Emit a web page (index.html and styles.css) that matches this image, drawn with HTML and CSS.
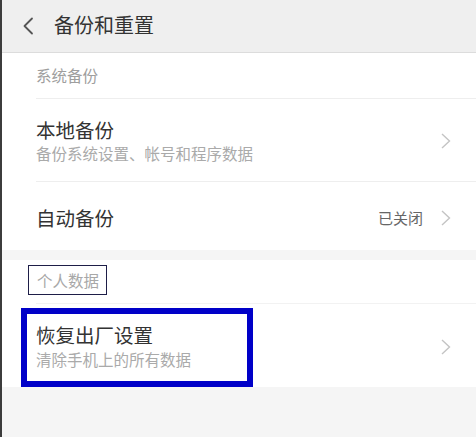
FILE: index.html
```html
<!DOCTYPE html>
<html lang="zh-CN">
<head>
<meta charset="utf-8">
<title>备份和重置</title>
<link rel="stylesheet" href="styles.css">
</head>
<body>
<div class="screen">
  <header class="topbar">
    <svg class="back" width="12" height="18" viewBox="0 0 12 18"><path d="M10 1.5 L2.5 9 L10 16.5" fill="none" stroke="#555" stroke-width="1.8" stroke-linecap="round" stroke-linejoin="round"/></svg>
    <h1 class="title">备份和重置</h1>
  </header>

  <section class="group">
    <div class="group-title">系统备份</div>
    <div class="item item-two">
      <div class="texts">
        <div class="primary">本地备份</div>
        <div class="secondary">备份系统设置、帐号和程序数据</div>
      </div>
      <svg class="chev" width="10" height="16" viewBox="0 0 10 16"><path d="M1 1 L8.5 8 L1 15" fill="none" stroke="#c4c4c4" stroke-width="1.4"/></svg>
    </div>
    <div class="item item-one">
      <div class="texts">
        <div class="primary">自动备份</div>
      </div>
      <span class="value">已关闭</span>
      <svg class="chev" width="10" height="16" viewBox="0 0 10 16"><path d="M1 1 L8.5 8 L1 15" fill="none" stroke="#c4c4c4" stroke-width="1.4"/></svg>
    </div>
  </section>

  <section class="group group-second">
    <div class="group-title group-title-marked"><span class="marked">个人数据</span></div>
    <div class="item item-two item-last">
      <div class="texts">
        <div class="primary">恢复出厂设置</div>
        <div class="secondary">清除手机上的所有数据</div>
      </div>
      <svg class="chev" width="10" height="16" viewBox="0 0 10 16"><path d="M1 1 L8.5 8 L1 15" fill="none" stroke="#c4c4c4" stroke-width="1.4"/></svg>
      <span class="annot"></span>
    </div>
  </section>
</div>
</body>
</html>
```

FILE: styles.css
```css
* { box-sizing: border-box; }
html, body {
  margin: 0;
  padding: 0;
  height: 100%;
}
body {
  background: #f5f5f5;
  font-family: "Noto Sans CJK SC", "Noto Sans", sans-serif;
  color: #333;
}
.screen {
  min-height: 100%;
  border-left: 2px solid #3c3c3c;
  background: #f5f5f5;
}
.topbar {
  height: 53px;
  background: #efefef;
  border-bottom: 1px solid #dcdcdc;
  display: flex;
  align-items: center;
  padding-left: 20px;
}
.back {
  display: block;
  margin-top: -1px;
}
.title {
  margin: 0 0 0 20px;
  font-size: 20px;
  font-weight: 400;
  color: #333;
  line-height: 24px;
  margin-top: -2px;
}
.group {
  background: #fff;
}
.group-second {
  margin-top: 10px;
}
.group-title {
  height: 45px;
  padding-left: 34px;
  display: flex;
  align-items: center;
  font-size: 15.5px;
  color: #9e9e9e;
  padding-bottom: 1px;
}
.group-title-marked {
  height: 43px;
  padding-left: 26px;
  align-items: flex-start;
  padding-top: 5px;
}
.marked {
  display: flex;
  align-items: center;
  height: 30px;
  padding: 0 7px 0 8px;
  border: 1px solid #1e1e48;
  color: #a8a8a8;
}
.item {
  position: relative;
  margin-left: 34px;
  border-top: 1px solid #eeeeee;
  display: flex;
  align-items: center;
  padding-right: 25px;
}
.item-two {
  height: 83px;
  padding-top: 2px;
}
.item-one {
  height: 69px;
  padding-top: 3px;
}
.item-last {
  height: 84px;
  border-top-color: #f2f2f2;
}
.texts {
  flex: 1;
  display: flex;
  flex-direction: column;
}
.primary {
  font-size: 19.5px;
  line-height: 24px;
  color: #333;
}
.secondary {
  font-size: 15.5px;
  line-height: 23px;
  color: #aaaaaa;
}
.item-last .secondary {
  margin-top: 1px;
}
.value {
  font-size: 15px;
  color: #666;
  margin-right: 18px;
}
.chev {
  display: block;
  flex: none;
}
.annot {
  position: absolute;
  left: -15px;
  top: 4px;
  width: 232px;
  bottom: 0;
  border: 6px solid #0000c8;
  pointer-events: none;
}
```
